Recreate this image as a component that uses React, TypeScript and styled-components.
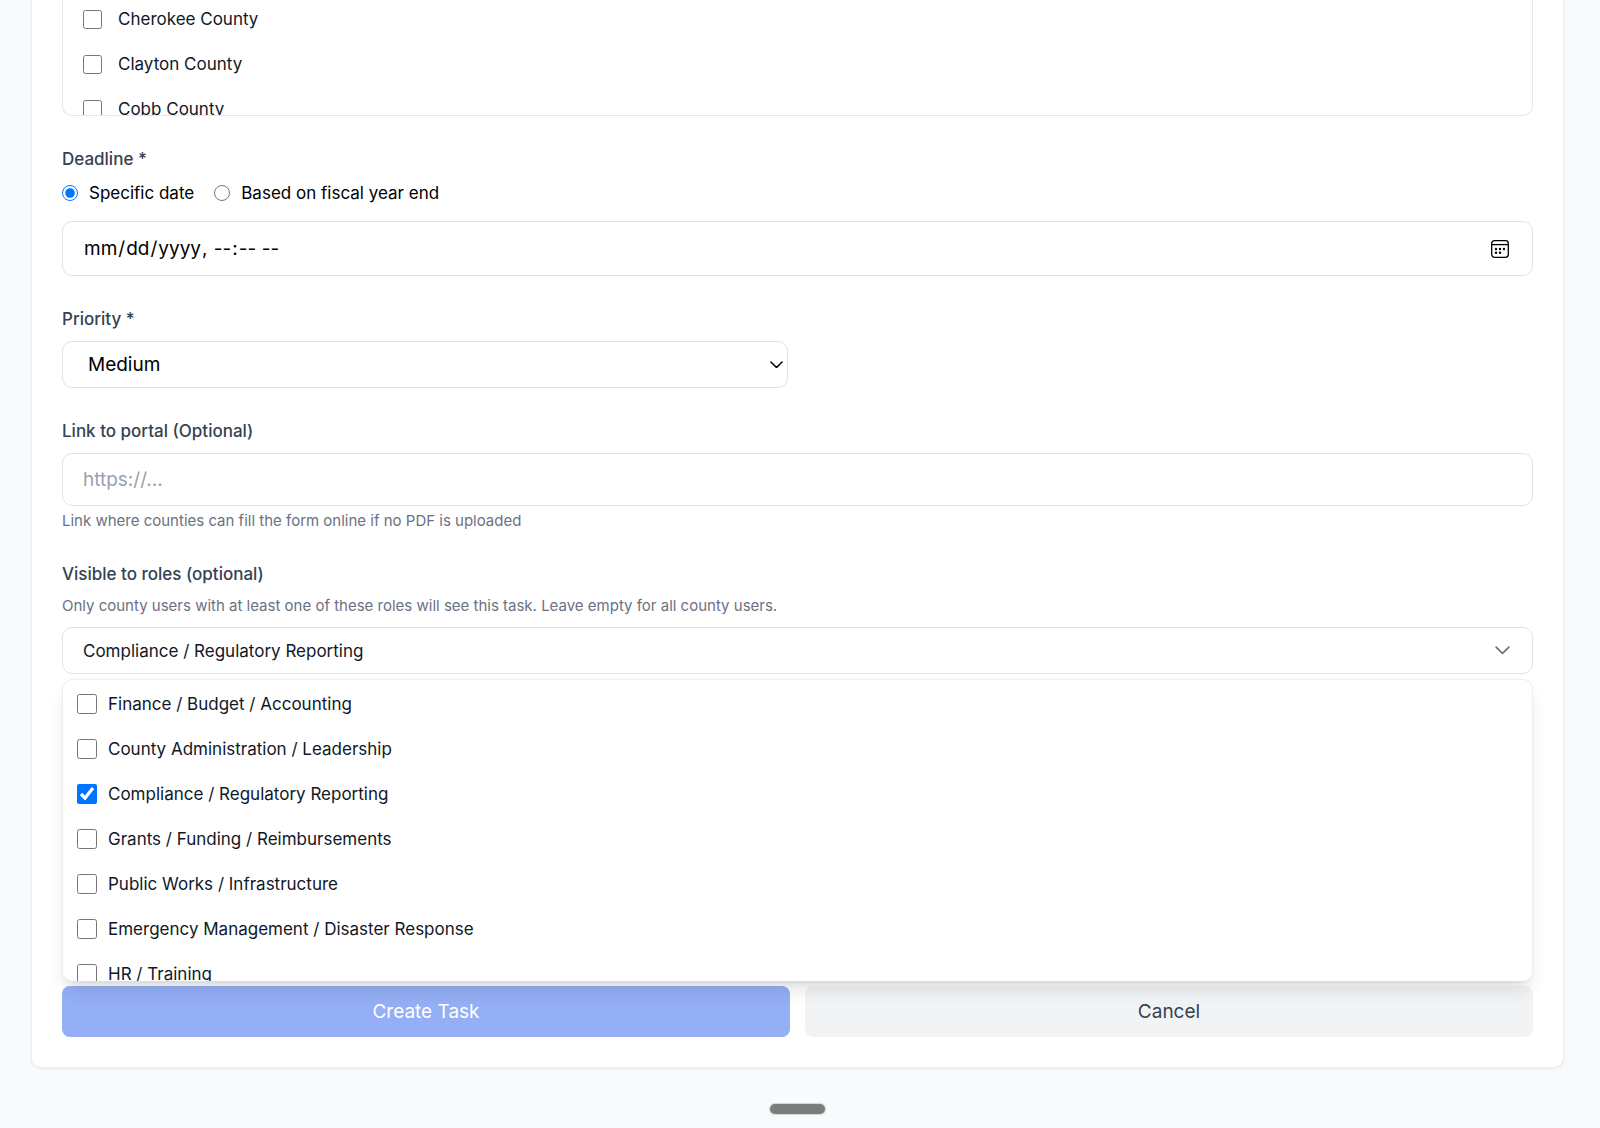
import React, { useState } from "react";
import styled, { createGlobalStyle } from "styled-components";

const GlobalStyle = createGlobalStyle`
  *, *::before, *::after { box-sizing: border-box; }
  body {
    margin: 0;
    background: #f9fafb;
    color: #000;
    font-family: Inter, "Liberation Sans", sans-serif;
    font-size: 17px;
    line-height: 24px;
  }
  button, input, select { font: inherit; }
`;

const Page = styled.main`
  min-height: 100vh;
  padding: 0 36px 13px 31px;
`;

const Card = styled.form`
  padding: 0 30px;
  background: #fff;
  border: 1px solid #eceef0;
  border-top: 0;
  border-radius: 0 0 10px 10px;
  box-shadow: 0 1px 3px rgba(0, 0, 0, 0.06);
`;

const Field = styled.div`
  margin-bottom: 31px;
`;

const labelStyle = `
  display: block;
  margin: 0 0 10px;
  padding: 0;
  color: #364153;
  font-weight: 500;
`;

const Label = styled.label`${labelStyle}`;

const Group = styled.fieldset`
  margin: 0 0 31px;
  padding: 0;
  border: 0;
  min-width: 0;
`;

const Legend = styled.legend`${labelStyle}`;

const CountyList = styled.div`
  display: flex;
  flex-direction: column;
  gap: 21px;
  height: 116px;
  margin-bottom: 31px;
  padding: 7px 20px 0;
  overflow: hidden;
  border: 1px solid #e5e7eb;
  border-top: 0;
  border-radius: 0 0 10px 10px;
`;

const Choice = styled.label<{ $gap: number }>`
  display: flex;
  flex-shrink: 0;
  align-items: center;
  gap: ${(p) => p.$gap}px;
  color: #101828;
`;

const Checkbox = styled.input<{ $size: number }>`
  flex-shrink: 0;
  width: ${(p) => p.$size}px;
  height: ${(p) => p.$size}px;
  margin: 0;
  accent-color: #0075ff;
`;

const RadioRow = styled.div`
  display: flex;
  gap: 20px;
  margin-bottom: 16px;
`;

const RadioChoice = styled.label`
  display: flex;
  align-items: center;
  gap: 11px;
`;

const Radio = styled.input`
  width: 16px;
  height: 16px;
  margin: 0;
  accent-color: #0075ff;
`;

const ControlWrap = styled.div<{ $half?: boolean }>`
  position: relative;
  width: ${(p) => (p.$half ? "calc(50% - 10px)" : "100%")};
`;

const TextInput = styled.input<{ $height: number }>`
  display: block;
  width: 100%;
  height: ${(p) => p.$height}px;
  padding: 0 20px;
  background: #fff;
  border: 1px solid #e0e2e6;
  border-radius: 10px;
  color: #000;
  font-size: 19px;
  &::placeholder { color: #99a1af; opacity: 1; }
  &::-webkit-calendar-picker-indicator { opacity: 0; }
`;

const Select = styled.select`
  display: block;
  width: 100%;
  height: 47px;
  padding: 0 25px;
  appearance: none;
  background: #fff;
  border: 1px solid #e0e2e6;
  border-radius: 10px;
  color: #000;
  font-size: 19px;
`;

const Adornment = styled.span<{ $right: number }>`
  position: absolute;
  top: 0;
  bottom: 0;
  right: ${(p) => p.$right}px;
  display: flex;
  align-items: center;
  pointer-events: none;
`;

const Hint = styled.p<{ $above?: boolean }>`
  margin: ${(p) => (p.$above ? "0 0 11px" : "5px 0 0")};
  color: #6a7282;
  font-size: 15px;
  line-height: 20px;
`;

const RoleTrigger = styled.button`
  display: flex;
  align-items: center;
  justify-content: space-between;
  width: 100%;
  height: 47px;
  padding: 0 22px 0 20px;
  background: #fff;
  border: 1px solid #e0e2e6;
  border-radius: 10px;
  color: #101828;
`;

const RoleMenu = styled.div`
  position: relative;
  z-index: 1;
  height: 302px;
  margin: 5px 0;
  padding-top: 1px;
  overflow: hidden;
  background: #fff;
  border: 1px solid #eceef0;
  border-bottom: 0;
  border-radius: 10px;
  box-shadow: 0 13px 19px -4px rgba(0, 0, 0, 0.1), 0 5px 8px -5px rgba(0, 0, 0, 0.14);
`;

const RoleRow = styled.div`
  display: flex;
  align-items: center;
  height: 45px;
  padding: 0 14px;
`;

const Actions = styled.div`
  display: grid;
  grid-template-columns: 1fr 1fr;
  gap: 15px;
  padding-bottom: 30px;
`;

const ActionButton = styled.button<{ $primary?: boolean }>`
  height: 51px;
  padding: 0;
  border: 0;
  border-radius: 8px;
  background: ${(p) => (p.$primary ? "#94aff5" : "#f2f3f5")};
  color: ${(p) => (p.$primary ? "#fff" : "#364153")};
  font-size: 19px;
`;

const DragHandle = styled.div`
  width: 55px;
  height: 10px;
  margin: 36px auto 0;
  border-radius: 5px;
  background: #7c7e7d;
  box-shadow: 0 0 1px 1px rgba(124, 126, 125, 0.3);
`;

const CalendarIcon = () => (
  <svg width="18" height="18" viewBox="0 0 18 18" fill="none" stroke="#000" strokeWidth="1.3" aria-hidden="true">
    <rect x="0.7" y="0.7" width="16.6" height="16.6" rx="2.8" />
    <path d="M1 4.6h16" />
    <g fill="#000" stroke="none">
      <circle cx="5" cy="9" r="1.2" />
      <circle cx="9" cy="9" r="1.2" />
      <circle cx="13" cy="9" r="1.2" />
      <circle cx="5" cy="12.8" r="1.2" />
      <circle cx="9" cy="12.8" r="1.2" />
    </g>
  </svg>
);

const Chevron = ({ width, color }: { width: number; color: string }) => (
  <svg width={width} height={width / 2 + 1} viewBox="0 0 14 8" fill="none" stroke={color} strokeWidth="1.6" aria-hidden="true">
    <path d="M1 1l6 6 6-6" strokeLinecap="round" strokeLinejoin="round" />
  </svg>
);

const counties = ["Cherokee County", "Clayton County", "Cobb County"];

const roles = [
  "Finance / Budget / Accounting",
  "County Administration / Leadership",
  "Compliance / Regulatory Reporting",
  "Grants / Funding / Reimbursements",
  "Public Works / Infrastructure",
  "Emergency Management / Disaster Response",
  "HR / Training",
];

export default function App() {
  const [selected, setSelected] = useState<string[]>([roles[2]]);
  const toggle = (role: string) =>
    setSelected((now) => (now.includes(role) ? now.filter((r) => r !== role) : [...now, role]));

  return (
    <>
      <GlobalStyle />
      <Page>
        <Card onSubmit={(e) => e.preventDefault()}>
          <CountyList>
            {counties.map((county) => (
              <Choice key={county} $gap={16}>
                <Checkbox type="checkbox" $size={19} />
                {county}
              </Choice>
            ))}
          </CountyList>

          <Group>
            <Legend>Deadline *</Legend>
            <RadioRow>
              <RadioChoice>
                <Radio type="radio" name="deadline" defaultChecked />
                Specific date
              </RadioChoice>
              <RadioChoice>
                <Radio type="radio" name="deadline" />
                Based on fiscal year end
              </RadioChoice>
            </RadioRow>
            <ControlWrap>
              <TextInput type="datetime-local" aria-label="Deadline date" $height={55} />
              <Adornment $right={24}>
                <CalendarIcon />
              </Adornment>
            </ControlWrap>
          </Group>

          <Field>
            <Label htmlFor="priority">Priority *</Label>
            <ControlWrap $half>
              <Select id="priority" defaultValue="Medium">
                <option>Low</option>
                <option>Medium</option>
                <option>High</option>
              </Select>
              <Adornment $right={5}>
                <Chevron width={13} color="#000" />
              </Adornment>
            </ControlWrap>
          </Field>

          <Field>
            <Label htmlFor="portal">Link to portal (Optional)</Label>
            <TextInput id="portal" type="url" placeholder="https://..." $height={53} />
            <Hint>Link where counties can fill the form online if no PDF is uploaded</Hint>
          </Field>

          <Label htmlFor="roles">Visible to roles (optional)</Label>
          <Hint $above>
            Only county users with at least one of these roles will see this task. Leave empty for all county users.
          </Hint>
          <RoleTrigger id="roles" type="button" aria-expanded="true">
            {selected.join(", ")}
            <Chevron width={15} color="#6a7282" />
          </RoleTrigger>
          <RoleMenu>
            {roles.map((role) => (
              <RoleRow key={role}>
                <Choice $gap={11}>
                  <Checkbox
                    type="checkbox"
                    $size={20}
                    checked={selected.includes(role)}
                    onChange={() => toggle(role)}
                  />
                  {role}
                </Choice>
              </RoleRow>
            ))}
          </RoleMenu>

          <Actions>
            <ActionButton $primary type="submit">Create Task</ActionButton>
            <ActionButton type="button">Cancel</ActionButton>
          </Actions>
        </Card>
        <DragHandle />
      </Page>
    </>
  );
}
